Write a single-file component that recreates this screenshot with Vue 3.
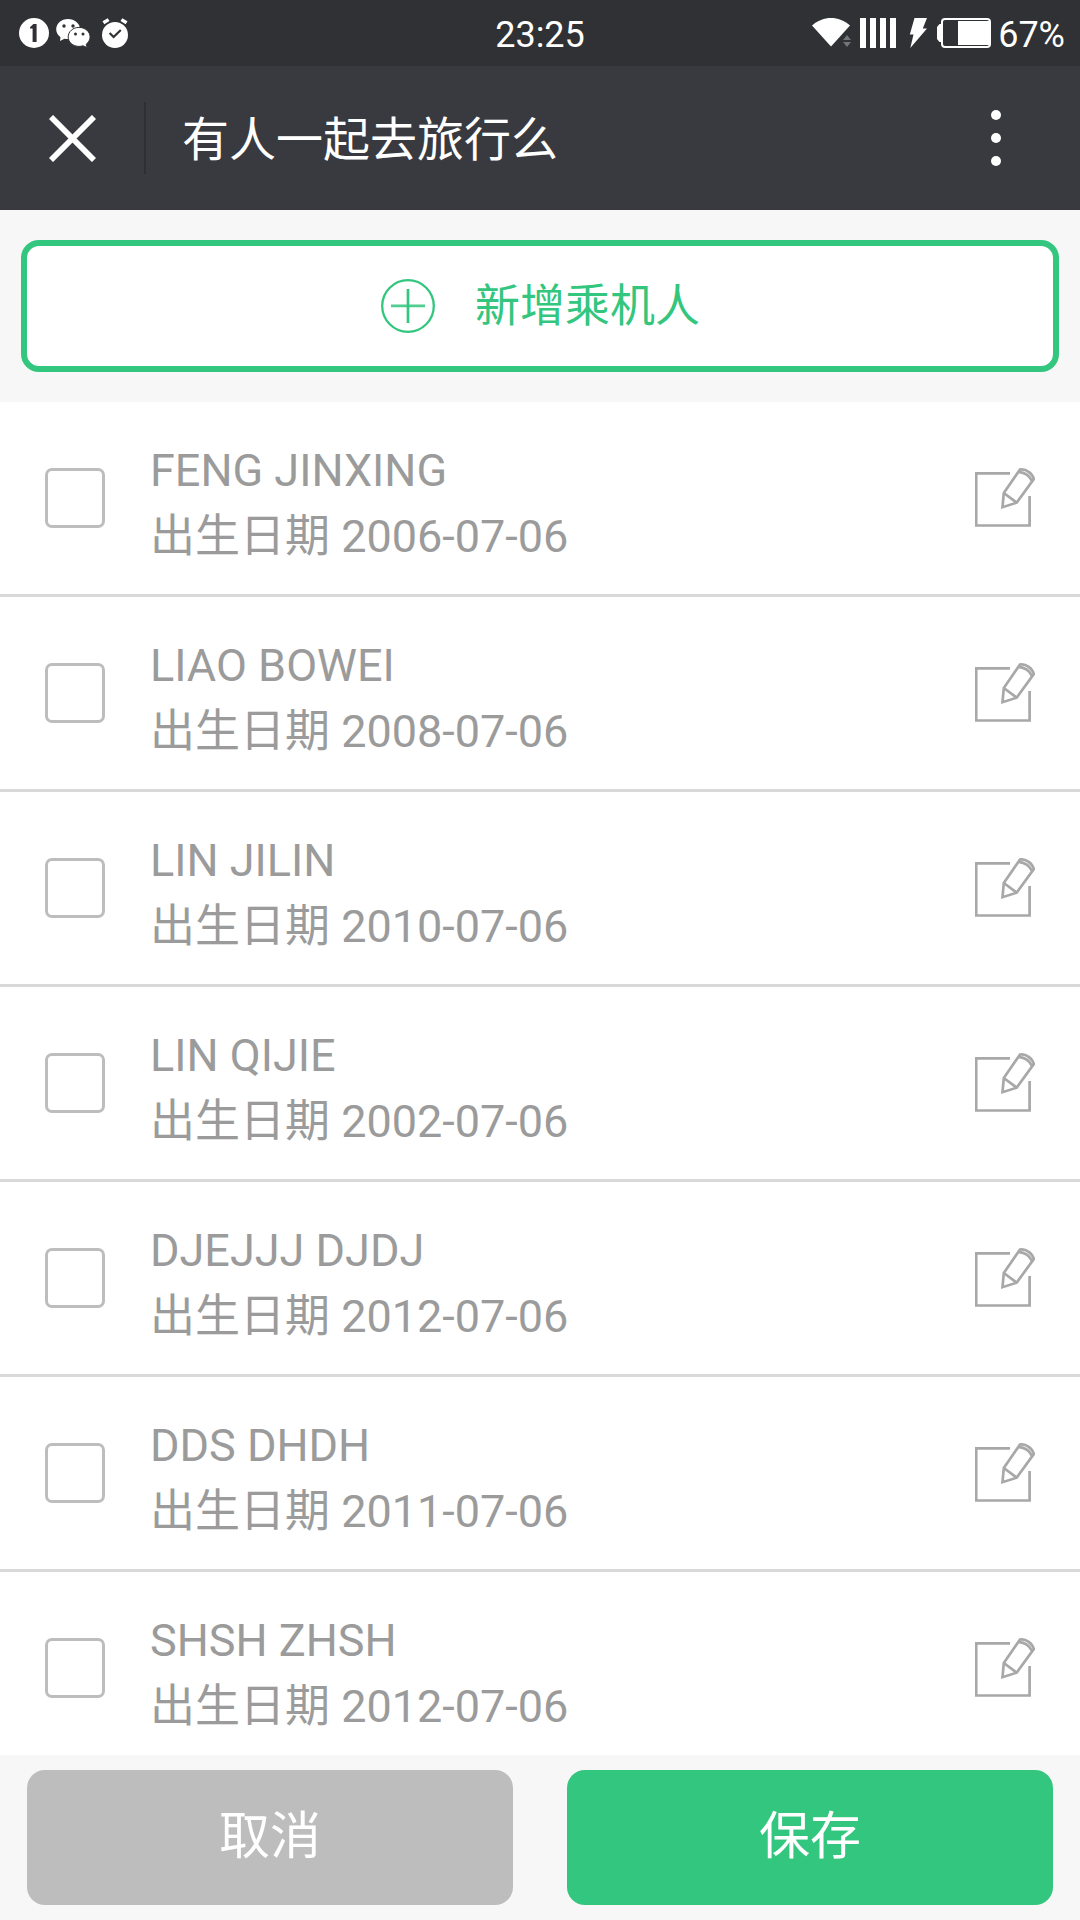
<script setup>
import { ref } from 'vue'

const passengers = ref([
  { name: 'FENG JINXING', birth: '2006-07-06', checked: false },
  { name: 'LIAO BOWEI', birth: '2008-07-06', checked: false },
  { name: 'LIN JILIN', birth: '2010-07-06', checked: false },
  { name: 'LIN QIJIE', birth: '2002-07-06', checked: false },
  { name: 'DJEJJJ DJDJ', birth: '2012-07-06', checked: false },
  { name: 'DDS DHDH', birth: '2011-07-06', checked: false },
  { name: 'SHSH ZHSH', birth: '2012-07-06', checked: false },
])
</script>

<template>
  <div class="screen">
    <div class="status">
      <div class="side">
        <svg class="notices" width="140" height="66" viewBox="0 0 140 66">
          <circle cx="34" cy="33" r="15" fill="#fff" />
          <path d="M30 27.200 33.400 24H36.600V42H32.600V28.400H30Z" fill="#303135" />
          <path d="M68 19c-6.600 0-11.800 4.500-11.800 10.300 0 3.200 1.600 6 4.300 7.900L60 41l4.400-2.300c1.200.3 2.400.4 3.600.4 6.600 0 12-4.300 12-10S74.600 19 68 19Z" fill="#fff" />
          <path d="M79 27.400c-6 0-10.800 4.200-10.800 9.500s4.800 9.500 10.800 9.500c1.400 0 2.800-.2 4-.6l4.200 1.800-1-3.400c2.300-1.700 3.900-4.300 3.900-7.300 0-5.300-5-9.500-11.100-9.500Z" fill="#fff" stroke="#303135" stroke-width="1" />
          <g fill="#303135">
            <circle cx="64" cy="26" r="1.700" /><circle cx="73" cy="26" r="1.700" />
            <circle cx="75.500" cy="34" r="1.500" /><circle cx="83" cy="34" r="1.500" />
          </g>
          <circle cx="115" cy="35" r="13" fill="#fff" />
          <path d="M103.400 22.800 108.600 19.600M126.600 22.800 121.400 19.600" stroke="#fff" stroke-width="3.400" />
          <path d="M109.600 33 113.600 37 120.800 30" fill="none" stroke="#303135" stroke-width="2.200" />
        </svg>
      </div>
      <span class="clock">23:25</span>
      <div class="side right">
        <svg width="184" height="66" viewBox="810 0 184 66">
          <path d="M812 25.500C823 15.500 839 15.500 850 25.500L831 46.500Z" fill="#fff" />
          <path d="M843 40 847 35 851 40ZM843 42 847 47 851 42Z" fill="#747578" />
          <path d="M860 18h6v30h-6zM870 18h6v30h-6zM880 18h6v30h-6zM890 18h6v30h-6z" fill="#fff" />
          <path d="M914.500 18H927L922.800 28.500H927L910.300 48 913.500 34.600H909.800Z" fill="#fff" />
          <rect x="942" y="19" width="48" height="28" rx="3" fill="none" stroke="#fff" stroke-width="2" />
          <path d="M958 21H989V45H958ZM941 24H939.500L937 27V39L939.500 42H941Z" fill="#fff" />
        </svg>
        <span class="percent">67%</span>
      </div>
    </div>

    <header class="nav">
      <button class="close" aria-label="关闭">
        <svg width="47" height="47" viewBox="0 0 47 47">
          <path d="M2 2 45 45M45 2 2 45" stroke="#fff" stroke-width="5.800" />
        </svg>
      </button>
      <h1>有人一起去旅行么</h1>
      <button class="more" aria-label="更多"><i></i><i></i><i></i></button>
    </header>

    <div class="add-area">
      <button class="add">
        <svg width="54" height="54" viewBox="0 0 54 54" fill="none" stroke="#32c67e">
          <circle cx="27" cy="27" r="25.800" stroke-width="2.300" />
          <path d="M27 10V44" stroke-width="2.700" />
          <path d="M10 26.900H44" stroke-width="2.700" opacity=".86" />
        </svg>
        <span>新增乘机人</span>
      </button>
    </div>

    <ul class="list">
      <li v-for="p in passengers" :key="p.name">
        <input v-model="p.checked" type="checkbox" :aria-label="p.name" />
        <div class="info">
          <div>{{ p.name }}</div>
          <div>出生日期 {{ p.birth }}</div>
        </div>
        <svg class="edit" width="60" height="60" viewBox="0 0 60 60" fill="none" stroke="#a8a8a8" stroke-width="2.700">
          <path d="M35 5.400H1.200V57.500H54.600V28" />
          <path d="M45 1.600 28.800 25 27.500 39.200 41.700 34.700 58.800 11C57.500 5.500 51 .5 45 1.600Z" />
          <path d="M28.800 25 41.700 34.700M43.600 3.800C49.500 4.500 54.500 7.500 57 12.800" />
        </svg>
      </li>
    </ul>

    <footer>
      <button class="cancel">取消</button>
      <button class="save">保存</button>
    </footer>
  </div>
</template>

<style>
body {
  margin: 0;
}
</style>

<style scoped>
.screen {
  width: 1080px;
  height: 1920px;
  display: flex;
  flex-direction: column;
  overflow: hidden;
  background: #fff;
  font-family: Roboto, "Noto Sans CJK SC", sans-serif;
}
button {
  border: 0;
  margin: 0;
  padding: 0;
  background: none;
  font: inherit;
  box-sizing: border-box;
}
svg {
  display: block;
  flex: none;
}
.status {
  height: 66px;
  flex: none;
  display: flex;
  align-items: center;
  background: #303135;
  color: #fff;
  font-size: 36px;
  line-height: 66px;
}
.side {
  flex: 1 1 0;
  min-width: 0;
  display: flex;
}
.right {
  justify-content: flex-end;
}
.clock,
.percent {
  padding-top: 2px;
  height: 64px;
}
.percent {
  margin: 0 15px 0 4px;
  white-space: nowrap;
}
.nav {
  height: 144px;
  flex: none;
  display: flex;
  align-items: center;
  background: #393a3f;
  color: #fff;
}
.close {
  width: 146px;
  height: 72px;
  padding-left: 49px;
  display: flex;
  align-items: center;
  border-right: 2px solid #2e2f33;
}
h1 {
  flex: 1;
  margin: 3px 0 0 36px;
  font-size: 47px;
  line-height: 70px;
  font-weight: 400;
}
.more {
  display: flex;
  flex-direction: column;
  gap: 13px;
  margin-right: 79px;
}
.more i {
  width: 10px;
  height: 10px;
  border-radius: 50%;
  background: #fff;
}
.add-area {
  flex: none;
  height: 192px;
  padding: 30px 21px;
  box-sizing: border-box;
  background: #f7f7f7;
}
.add {
  width: 100%;
  height: 132px;
  display: flex;
  align-items: center;
  justify-content: center;
  gap: 40px;
  padding-left: 1px;
  border: 6px solid #32c67e;
  border-radius: 18px;
  background: #fff;
  color: #32c67e;
  font-size: 45px;
  line-height: 66px;
}
.add span {
  padding-top: 2px;
}
.list {
  flex: 1;
  min-height: 0;
  overflow: hidden;
  margin: 0;
  padding: 0;
  list-style: none;
}
li {
  height: 195px;
  box-sizing: border-box;
  padding: 0 45px;
  display: flex;
  align-items: center;
  border-bottom: 3px solid #d9d9d9;
}
input {
  appearance: none;
  width: 60px;
  height: 60px;
  margin: 0;
  border: 3px solid #bdbdbd;
  border-radius: 7px;
  background: #fff;
}
.info {
  flex: 1;
  margin-left: 45px;
  padding-top: 12px;
  color: #9b9b9b;
  font-size: 45px;
  line-height: 66px;
}
footer {
  flex: none;
  height: 165px;
  padding: 15px 27px;
  box-sizing: border-box;
  display: flex;
  gap: 54px;
  background: #f7f7f7;
}
footer button {
  flex: 1;
  height: 135px;
  padding-bottom: 11px;
  border-radius: 18px;
  color: #fff;
  font-size: 51px;
}
.cancel {
  background: #bdbdbd;
}
.save {
  background: #32c67e;
}
</style>
